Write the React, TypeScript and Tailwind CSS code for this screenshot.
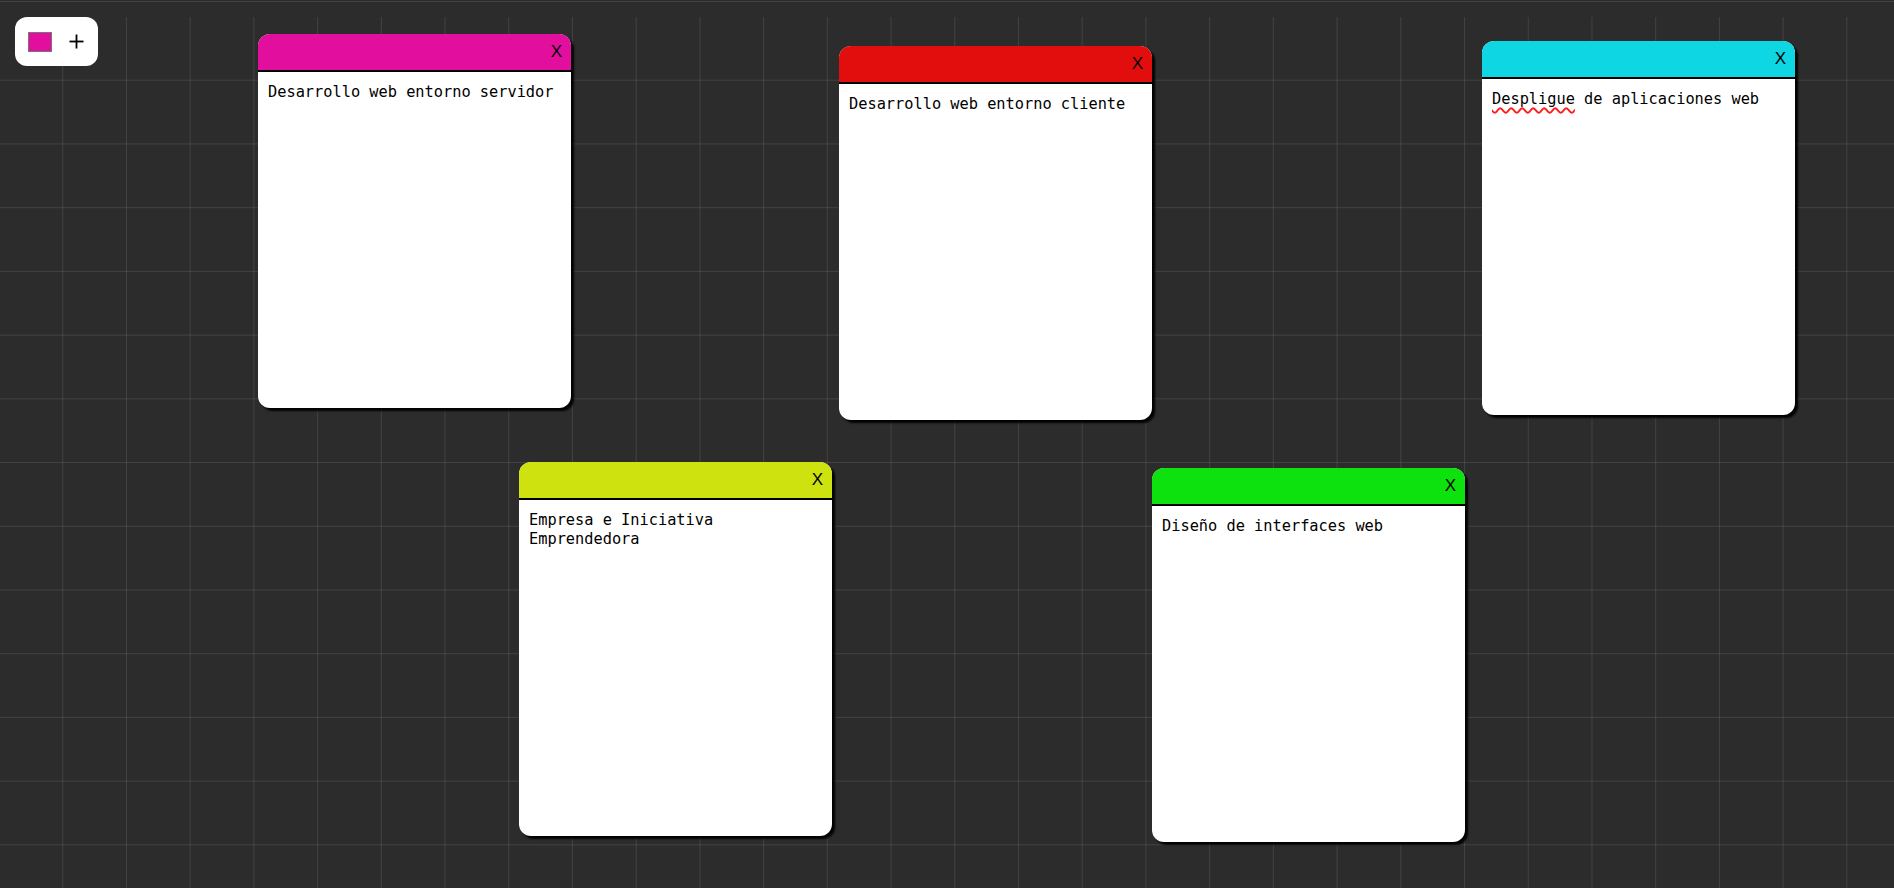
import React from "react";

type Note = {
  left: number;
  top: number;
  color: string;
  text: React.ReactNode;
};

const notes: Note[] = [
  { left: 258, top: 34, color: "bg-[#e20e9e]", text: "Desarrollo web entorno servidor" },
  { left: 839, top: 46, color: "bg-[#e20e0e]", text: "Desarrollo web entorno cliente" },
  {
    left: 1482,
    top: 41,
    color: "bg-[#0ed6e2]",
    text: (
      <>
        <span className="underline decoration-wavy decoration-[#ff1a1a] decoration-[1.5px] underline-offset-[3px]">Despligue</span> de aplicaciones web
      </>
    ),
  },
  { left: 519, top: 462, color: "bg-[#cde20e]", text: "Empresa e Iniciativa Emprendedora" },
  { left: 1152, top: 468, color: "bg-[#0ee20e]", text: "Diseño de interfaces web" },
];

function NoteCard({ note }: { note: Note }) {
  return (
    <div
      className="absolute w-[313px] h-[374px] rounded-[12px] bg-white shadow-[3px_3px_2px_rgba(0,0,0,0.95)] flex flex-col overflow-hidden"
      style={{ left: note.left, top: note.top }}
    >
      <div className={`${note.color} h-[38px] shrink-0 border-b-2 border-black flex justify-end items-start pt-[9px] pr-[9px]`}>
        <span className="text-[17px] leading-none text-black font-['Liberation_Sans',Arial,sans-serif]">X</span>
      </div>
      <div className="px-[10px] pt-[11px] text-[15.3px] leading-[19px] text-black font-['DejaVu_Sans_Mono','Liberation_Mono',monospace] whitespace-pre-wrap">
        {note.text}
      </div>
    </div>
  );
}

export default function App() {
  return (
    <div className="relative w-full h-screen overflow-hidden bg-[#2c2c2c]">
      <div className="absolute top-[1px] left-0 right-0 h-px bg-white/10" />
      <div className="absolute left-0 right-0 bottom-0 top-[17px] bg-[linear-gradient(to_right,transparent_62.73px,rgba(255,255,255,0.1)_62.73px),linear-gradient(to_bottom,transparent_62.73px,rgba(255,255,255,0.1)_62.73px)] bg-[size:63.73px_63.73px] bg-[position:-0.5px_0px]" />

      <div className="absolute left-[15px] top-[17px] w-[83px] h-[49px] rounded-[12px] bg-white flex items-center pl-[13px]">
        <div className="w-[24px] h-[20px] border border-[#767676] bg-[#e20e9e]" />
        <svg width="15" height="15" viewBox="0 0 15 15" className="ml-[17px]">
          <line x1="7.5" y1="0.5" x2="7.5" y2="14.5" stroke="black" strokeWidth="1.8" />
          <line x1="0.5" y1="7.5" x2="14.5" y2="7.5" stroke="black" strokeWidth="1.8" />
        </svg>
      </div>

      {notes.map((n, i) => (
        <NoteCard key={i} note={n} />
      ))}
    </div>
  );
}
